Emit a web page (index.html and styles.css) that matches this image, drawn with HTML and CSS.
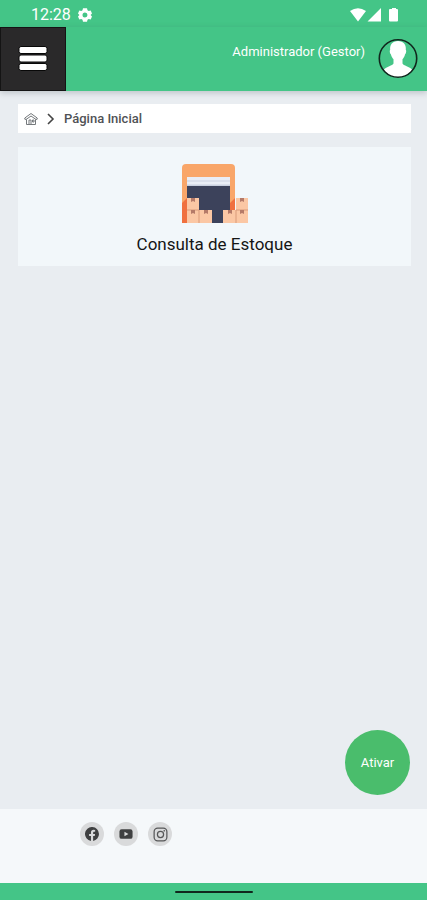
FILE: index.html
```html
<!DOCTYPE html>
<html lang="pt-BR">
<head>
<meta charset="utf-8">
<meta name="viewport" content="width=device-width, initial-scale=1">
<title>Página Inicial</title>
<link rel="stylesheet" href="styles.css">
</head>
<body>
<div class="status">
  <span class="status-time">12:28</span>
  <svg viewBox="0 0 14 14" width="14" height="14" aria-hidden="true"><path fill="#fff" fill-rule="evenodd" d="M5 .3h4l.5 2 1.200.7 2-.6 1.300 3L12.600 7l1.400 1.600-1.300 3-2-.6-1.200.7-.5 2H5l-.5-2-1.200-.7-2 .6L0 8.600 1.400 7 0 5.400l1.300-3 2 .6 1.200-.7zM7 4.500a2.500 2.500 0 1 0 0 5 2.500 2.500 0 0 0 0-5z"/></svg>
  <svg class="status-signals" viewBox="0 0 50 16" width="50" height="16" aria-hidden="true"><path fill="#fff" d="M1 4Q9-1.500 17 4L9 14.500zM32 1v13.500H18.500zM41 2h2V1h4v1h1q1 0 1 1v10.500q0 1-1 1h-7q-1 0-1-1V3q0-1 1-1z"/></svg>
</div>
<header class="header">
  <button class="menu" type="button" aria-label="Menu">
    <svg viewBox="0 0 32 28" width="32" height="28" aria-hidden="true"><g fill="#fff" stroke="#080808" stroke-width="1"><rect x="2" y="1.500" width="28" height="7" rx="2"/><rect x="2" y="10" width="28" height="7" rx="2"/><rect x="2" y="18.500" width="28" height="7" rx="2"/></g></svg>
  </button>
  <span class="user">Administrador (Gestor)</span>
  <svg class="avatar" viewBox="0 0 40 40" width="40" height="40" aria-hidden="true">
    <path fill="#fff" d="M20 2c-5.500 0-8.300 3.500-7.800 9-.8.400-.4 3.600.8 4.500.4 2 1.300 3.400 2.500 4.700v4.300c-.8 2.200-7 3-10 6.500C9 35.500 14 38.500 20 38.500s11-3 14.500-7.500c-3-3.500-9.200-4.300-10-6.500v-4.300c1.200-1.300 2.100-2.700 2.500-4.700 1.200-.9 1.600-4.100.8-4.500C28.300 5.500 25.500 2 20 2z"/>
    <circle cx="20" cy="19.500" r="18.700" fill="none" stroke="#10271d" stroke-width="1.600"/>
  </svg>
</header>
<main class="main">
  <nav class="crumbs" aria-label="Navegação">
    <a href="#" class="home" aria-label="Início"><svg viewBox="0 0 14 14" width="14" height="14" aria-hidden="true"><path fill="none" stroke="#75797c" stroke-linejoin="round" d="M.8 7.200V6L7 1.500 13.200 6v1.200L12 7.500 7 4 2 7.500zM2.500 7.500v5h9v-5M5 12.500V8h2v4.500M8.500 8h1.500v2H8.500z"/></svg></a>
    <svg viewBox="0 0 8 12" width="8" height="12" aria-hidden="true"><path fill="none" stroke="#444" stroke-width="1.600" d="M1 1l5 5-5 5"/></svg>
    <span>Página Inicial</span>
  </nav>
  <a href="#" class="card">
    <svg viewBox="0 0 66 59" width="66" height="59" aria-hidden="true">
      <path fill="#f9a669" d="M0 59V4q0-4 4-4h45q4 0 4 4v55z"/>
      <path fill="#f0703f" d="M0 59V39l5-5v25zM48 46V39l5-5v12z"/>
      <path fill="#3c425b" d="M5 22h43v37H5z"/>
      <path fill="#e9edf5" d="M5 13h43v9H5z"/>
      <path fill="#c9d0df" d="M5 16.500h43v1H5zM5 20.500h43v1.500H5z"/>
      <path fill="#fbc7a4" d="M5 34h12v12h13v13H5zM54 34h12v25H41V46h13z"/>
      <path fill="none" stroke="#d99b7b" d="M5 46h12v13M54 59V46h12"/>
      <path fill="#b57a68" d="M9 34h4v4l-2-1-2 1zM9 46h4v4l-2-1-2 1zM22 46h4v4l-2-1-2 1zM46 46h4v4l-2-1-2 1zM58 34h4v4l-2-1-2 1zM58 46h4v4l-2-1-2 1z"/>
    </svg>
    <span>Consulta de Estoque</span>
  </a>
  <button class="activate" type="button">Ativar</button>
</main>
<footer class="footer">
  <a href="#" class="social" aria-label="Facebook"><svg viewBox="0 0 16 16" width="14" height="14" aria-hidden="true"><path fill="#3f4041" d="M16 8a8 8 0 1 0-9.200 7.900v-5.600H4.700V8h2.100V6.200c0-2 1.200-3.100 3-3.100l1.800.2v2h-1c-1 0-1.300.6-1.300 1.200V8h2.200l-.4 2.300H9.300v5.600A8 8 0 0 0 16 8z"/></svg></a>
  <a href="#" class="social" aria-label="YouTube"><svg viewBox="0 0 16 16" width="14" height="14" aria-hidden="true"><rect x=".5" y="2.500" width="15" height="11" rx="2.500" fill="#3f4041"/><path fill="#d9dadb" d="M6.200 5.300v5.400L10.800 8z"/></svg></a>
  <a href="#" class="social" aria-label="Instagram"><svg viewBox="0 0 16 16" width="15" height="15" aria-hidden="true"><g fill="none" stroke="#555657" stroke-width="1.300"><rect x="1.200" y="1.200" width="13.600" height="13.600" rx="3.800"/><circle cx="8" cy="8" r="3.300"/></g><circle cx="12" cy="4" r=".9" fill="#555657"/></svg></a>
</footer>
<div class="gesture"><span class="gesture-bar"></span></div>
</body>
</html>
```
FILE: styles.css
```css
* {
  box-sizing: border-box;
}

body {
  margin: 0;
  min-height: 100vh;
  display: flex;
  flex-direction: column;
  background: #e9edf1;
  color: #151515;
  font-family: Roboto, "Liberation Sans", sans-serif;
}

a {
  color: inherit;
  text-decoration: none;
}

button {
  border: 0;
  padding: 0;
  font: inherit;
  cursor: pointer;
}

svg {
  display: block;
  flex: none;
}

.status {
  height: 27px;
  padding: 2px 28px 0 31px;
  display: flex;
  align-items: center;
  gap: 7px;
  background: #44c587;
  color: #fff;
  font-size: 16px;
}

.status-signals {
  margin-left: auto;
}

.header {
  height: 64px;
  padding-right: 9px;
  display: flex;
  align-items: center;
  background: #44c587;
  box-shadow: 0 2px 6px rgba(60, 70, 80, 0.25);
}

.menu {
  width: 66px;
  height: 100%;
  margin-right: auto;
  display: flex;
  align-items: center;
  justify-content: center;
  background: #2a292a;
  border: 1px solid #141414;
}

.user {
  margin-right: 13px;
  padding-bottom: 16px;
  color: #fff;
  font-size: 13px;
}

.main {
  position: relative;
  flex: 1;
  padding: 13px 16px 13px 18px;
  display: flex;
  flex-direction: column;
  gap: 14px;
}

.crumbs {
  height: 29px;
  padding: 0 6px;
  display: flex;
  align-items: center;
  gap: 9px;
  background: #fff;
  color: #505255;
  font-size: 13px;
  font-weight: 500;
}

.card {
  height: 119px;
  padding-top: 17px;
  display: flex;
  flex-direction: column;
  align-items: center;
  gap: 10px;
  background: #f2f7fa;
  font-size: 17px;
  line-height: 22px;
}

.activate {
  position: absolute;
  right: 17px;
  bottom: 14px;
  width: 65px;
  height: 65px;
  border-radius: 50%;
  background: #4abd6c;
  color: #fff;
  font-size: 13px;
}

.footer {
  height: 74px;
  padding: 13px 80px;
  display: flex;
  gap: 10px;
  background: #f5f8fa;
}

.social {
  width: 24px;
  height: 24px;
  display: flex;
  align-items: center;
  justify-content: center;
  border-radius: 50%;
  background: #d9dadb;
}

.gesture {
  height: 17px;
  display: flex;
  align-items: center;
  justify-content: center;
  background: #44c587;
}

.gesture-bar {
  width: 78px;
  height: 2px;
  border-radius: 1px;
  background: #10271d;
}
```
